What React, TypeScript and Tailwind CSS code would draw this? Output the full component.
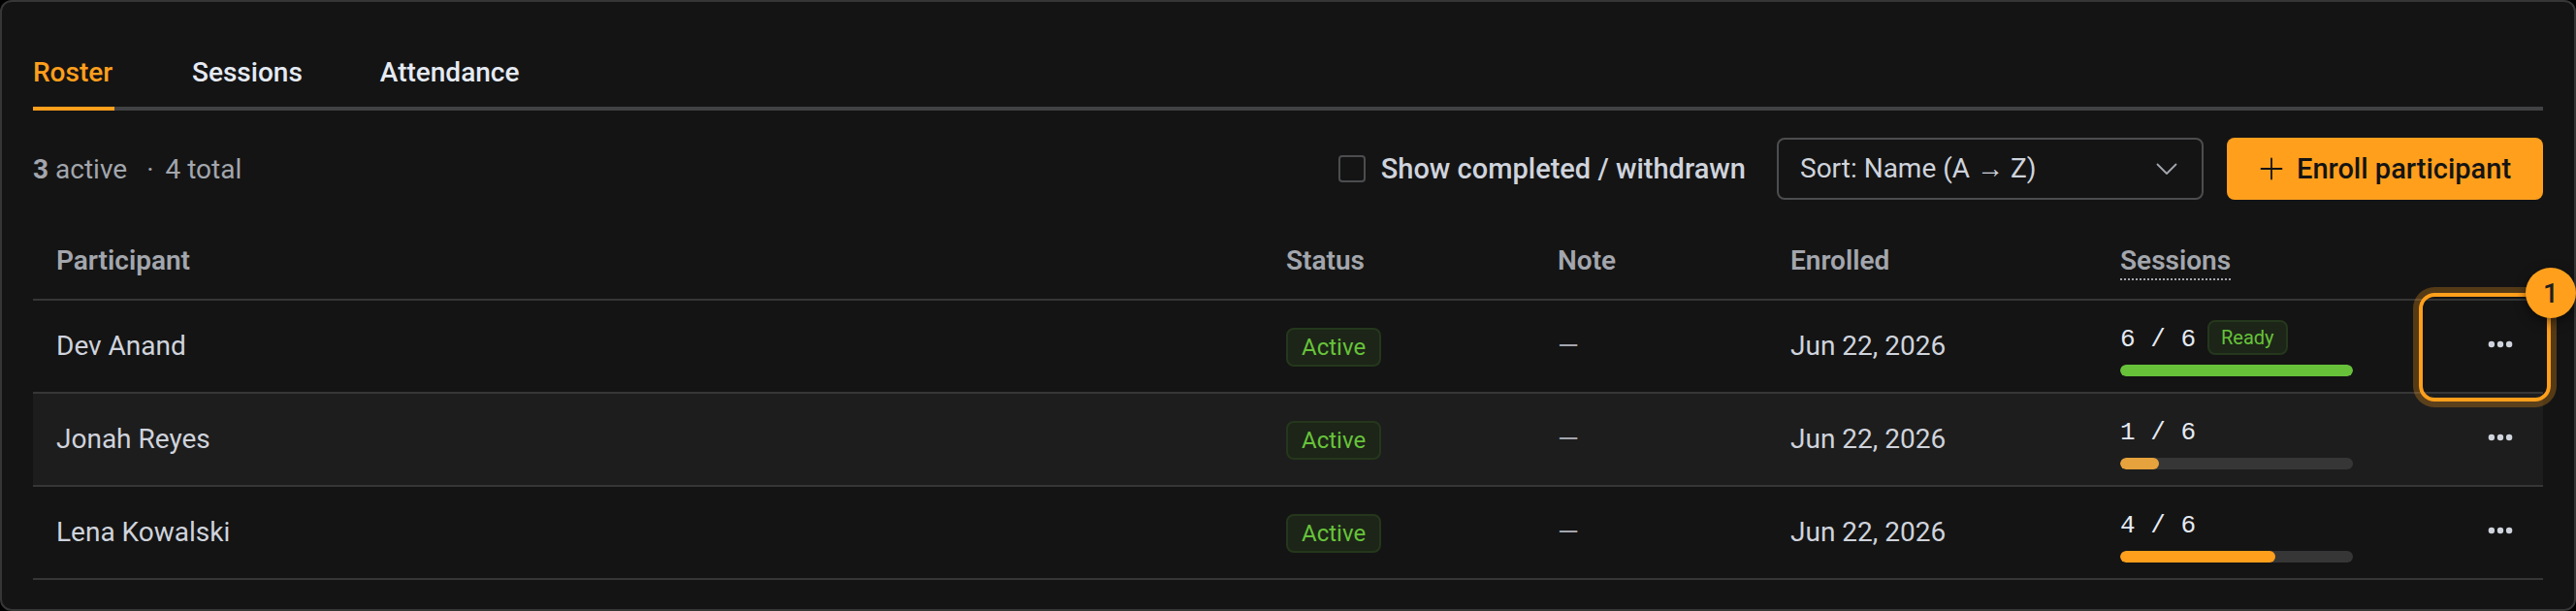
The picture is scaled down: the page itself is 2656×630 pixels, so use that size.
import React, { useState } from "react";

type Participant = {
  name: string;
  status: string;
  note: string;
  enrolled: string;
  done: number;
  total: number;
};

const tabs = ["Roster", "Sessions", "Attendance"];

const participants: Participant[] = [
  { name: "Dev Anand", status: "Active", note: "—", enrolled: "Jun 22, 2026", done: 6, total: 6 },
  { name: "Jonah Reyes", status: "Active", note: "—", enrolled: "Jun 22, 2026", done: 1, total: 6 },
  { name: "Lena Kowalski", status: "Active", note: "—", enrolled: "Jun 22, 2026", done: 4, total: 6 },
];

const barColor = (done: number, total: number) => {
  if (done >= total) return "bg-[#67c23a]";
  if (done / total < 0.5) return "bg-[#e6a23c]";
  return "bg-[#ff9f1c]";
};

const PlusIcon = () => (
  <svg className="size-7" viewBox="0 0 28 28" fill="none" stroke="currentColor" strokeWidth="1.8" strokeLinecap="round">
    <path d="M14 3.5v21M3.5 14h21" />
  </svg>
);

const ChevronIcon = () => (
  <svg
    className="pointer-events-none absolute right-6 top-1/2 size-7 -translate-y-1/2 text-[#a3a6ad]"
    viewBox="0 0 28 28"
    fill="none"
    stroke="currentColor"
    strokeWidth="1.8"
    strokeLinecap="round"
    strokeLinejoin="round"
  >
    <path d="M4.5 9.5L14 19l9.5-9.5" />
  </svg>
);

const MoreIcon = () => (
  <svg className="size-7" viewBox="0 0 28 28" fill="currentColor">
    <circle cx="4.9" cy="14" r="3.2" />
    <circle cx="14" cy="14" r="3.2" />
    <circle cx="23.1" cy="14" r="3.2" />
  </svg>
);

const SessionProgress = ({ done, total }: { done: number; total: number }) => (
  <div className="flex flex-col gap-2.5 pt-1">
    <div className="flex h-9 items-start gap-3">
      <span className="font-['Liberation_Mono',monospace] text-[26px] leading-10 text-[#e5eaf3]">
        {done} / {total}
      </span>
      {done >= total && (
        <span className="flex h-9 items-center rounded-lg border-2 border-[#25371c] bg-[#1c2518] px-3 text-[20px] text-[#67c23a]">
          Ready
        </span>
      )}
    </div>
    <div className="h-3 w-60 overflow-hidden rounded-full bg-[#363637]">
      <div
        className={`h-full rounded-full ${barColor(done, total)}`}
        style={{ width: `${(done / total) * 100}%` }}
      />
    </div>
  </div>
);

const App = () => {
  const [activeTab, setActiveTab] = useState("Roster");
  const [showAll, setShowAll] = useState(false);

  return (
    <div className="bg-black font-[Roboto,sans-serif] text-[28px] leading-10 text-[#cfd3dc]">
      <div className="rounded-xl border-2 border-[#363637] bg-[#141414] px-8 pt-8 pb-[30px]">
        {/* TABS */}
        <nav className="flex gap-20 shadow-[inset_0_-4px_0_#414243]">
          {tabs.map((tab) => (
            <button
              key={tab}
              type="button"
              onClick={() => setActiveTab(tab)}
              className={`h-20 min-w-21 border-b-4 pt-1.5 text-left font-medium ${
                tab === activeTab ? "border-[#ff9f1c] text-[#ff9f1c]" : "border-transparent text-[#e5eaf3]"
              }`}
            >
              {tab}
            </button>
          ))}
        </nav>

        {/* TOOLBAR */}
        <div className="mt-7 flex items-center justify-between">
          <p className="flex pt-0.5 text-[#a3a6ad]">
            <span>
              <strong className="font-bold">3</strong> active
            </span>
            <span className="ml-5">·</span>
            <span className="ml-3">4 total</span>
          </p>
          <div className="flex items-center gap-6">
            <label className="mr-2 flex items-center gap-4 text-[29px] font-medium">
              <input
                type="checkbox"
                checked={showAll}
                onChange={(e) => setShowAll(e.target.checked)}
                className="size-7 appearance-none rounded-sm border-2 border-[#4c4d4f] checked:bg-[#ff9f1c]"
              />
              Show completed / withdrawn
            </label>
            <div className="relative w-110">
              <select
                aria-label="Sort"
                className="h-16 w-full appearance-none rounded-lg border-2 border-[#4c4d4f] bg-transparent px-[22px]"
              >
                <option>Sort: Name (A → Z)</option>
              </select>
              <ChevronIcon />
            </div>
            <button
              type="button"
              className="flex h-16 min-w-[326px] items-center gap-3 rounded-lg bg-[#ff9f1c] px-8 text-[29px] font-medium text-[#141414]"
            >
              <PlusIcon />
              Enroll participant
            </button>
          </div>
        </div>

        {/* TABLE */}
        <table className="mt-6 w-full table-fixed border-separate border-spacing-0 text-left">
          <thead>
            <tr className="h-20 text-[#a3a6ad] *:border-b-2 *:border-[#363637] *:px-6 *:font-semibold">
              <th>Participant</th>
              <th className="w-70">Status</th>
              <th className="w-60">Note</th>
              <th className="w-85">Enrolled</th>
              <th className="w-85">
                <span className="inline-block border-b-2 border-dotted border-[#a3a6ad] align-middle leading-9">
                  Sessions
                </span>
              </th>
              <th className="w-30" aria-label="Actions" />
            </tr>
          </thead>
          <tbody>
            {participants.map((p, i) => (
              <tr key={p.name} className="h-24 even:bg-[#1d1d1d] *:border-b-2 *:border-[#363637] *:px-6">
                <td>{p.name}</td>
                <td>
                  <span className="mt-0.5 flex h-10 w-fit items-center rounded-lg border-2 border-[#25371c] bg-[#1c2518] px-3.5 text-[24px] text-[#67c23a]">
                    {p.status}
                  </span>
                </td>
                <td className="text-[#a3a6ad]">{p.note}</td>
                <td>{p.enrolled}</td>
                <td>
                  <SessionProgress done={p.done} total={p.total} />
                </td>
                <td className="relative">
                  <button type="button" aria-label="More actions" className="ml-auto flex px-1.5 pb-1">
                    <MoreIcon />
                  </button>
                  {i === 0 && (
                    <div className="pointer-events-none absolute -inset-x-2 -top-2 -bottom-2.5 rounded-2xl border-4 border-[#ff9f1c] shadow-[0_0_0_6px_rgba(255,159,28,0.28)]">
                      <span className="absolute -top-[30px] -right-[30px] flex size-13 items-center justify-center rounded-full bg-[#ff9f1c] pt-0.5 font-medium text-[#1f1f1f] shadow-[0_4px_12px_rgba(0,0,0,0.5)]">
                        1
                      </span>
                    </div>
                  )}
                </td>
              </tr>
            ))}
          </tbody>
        </table>
      </div>
    </div>
  );
};

export default App;
